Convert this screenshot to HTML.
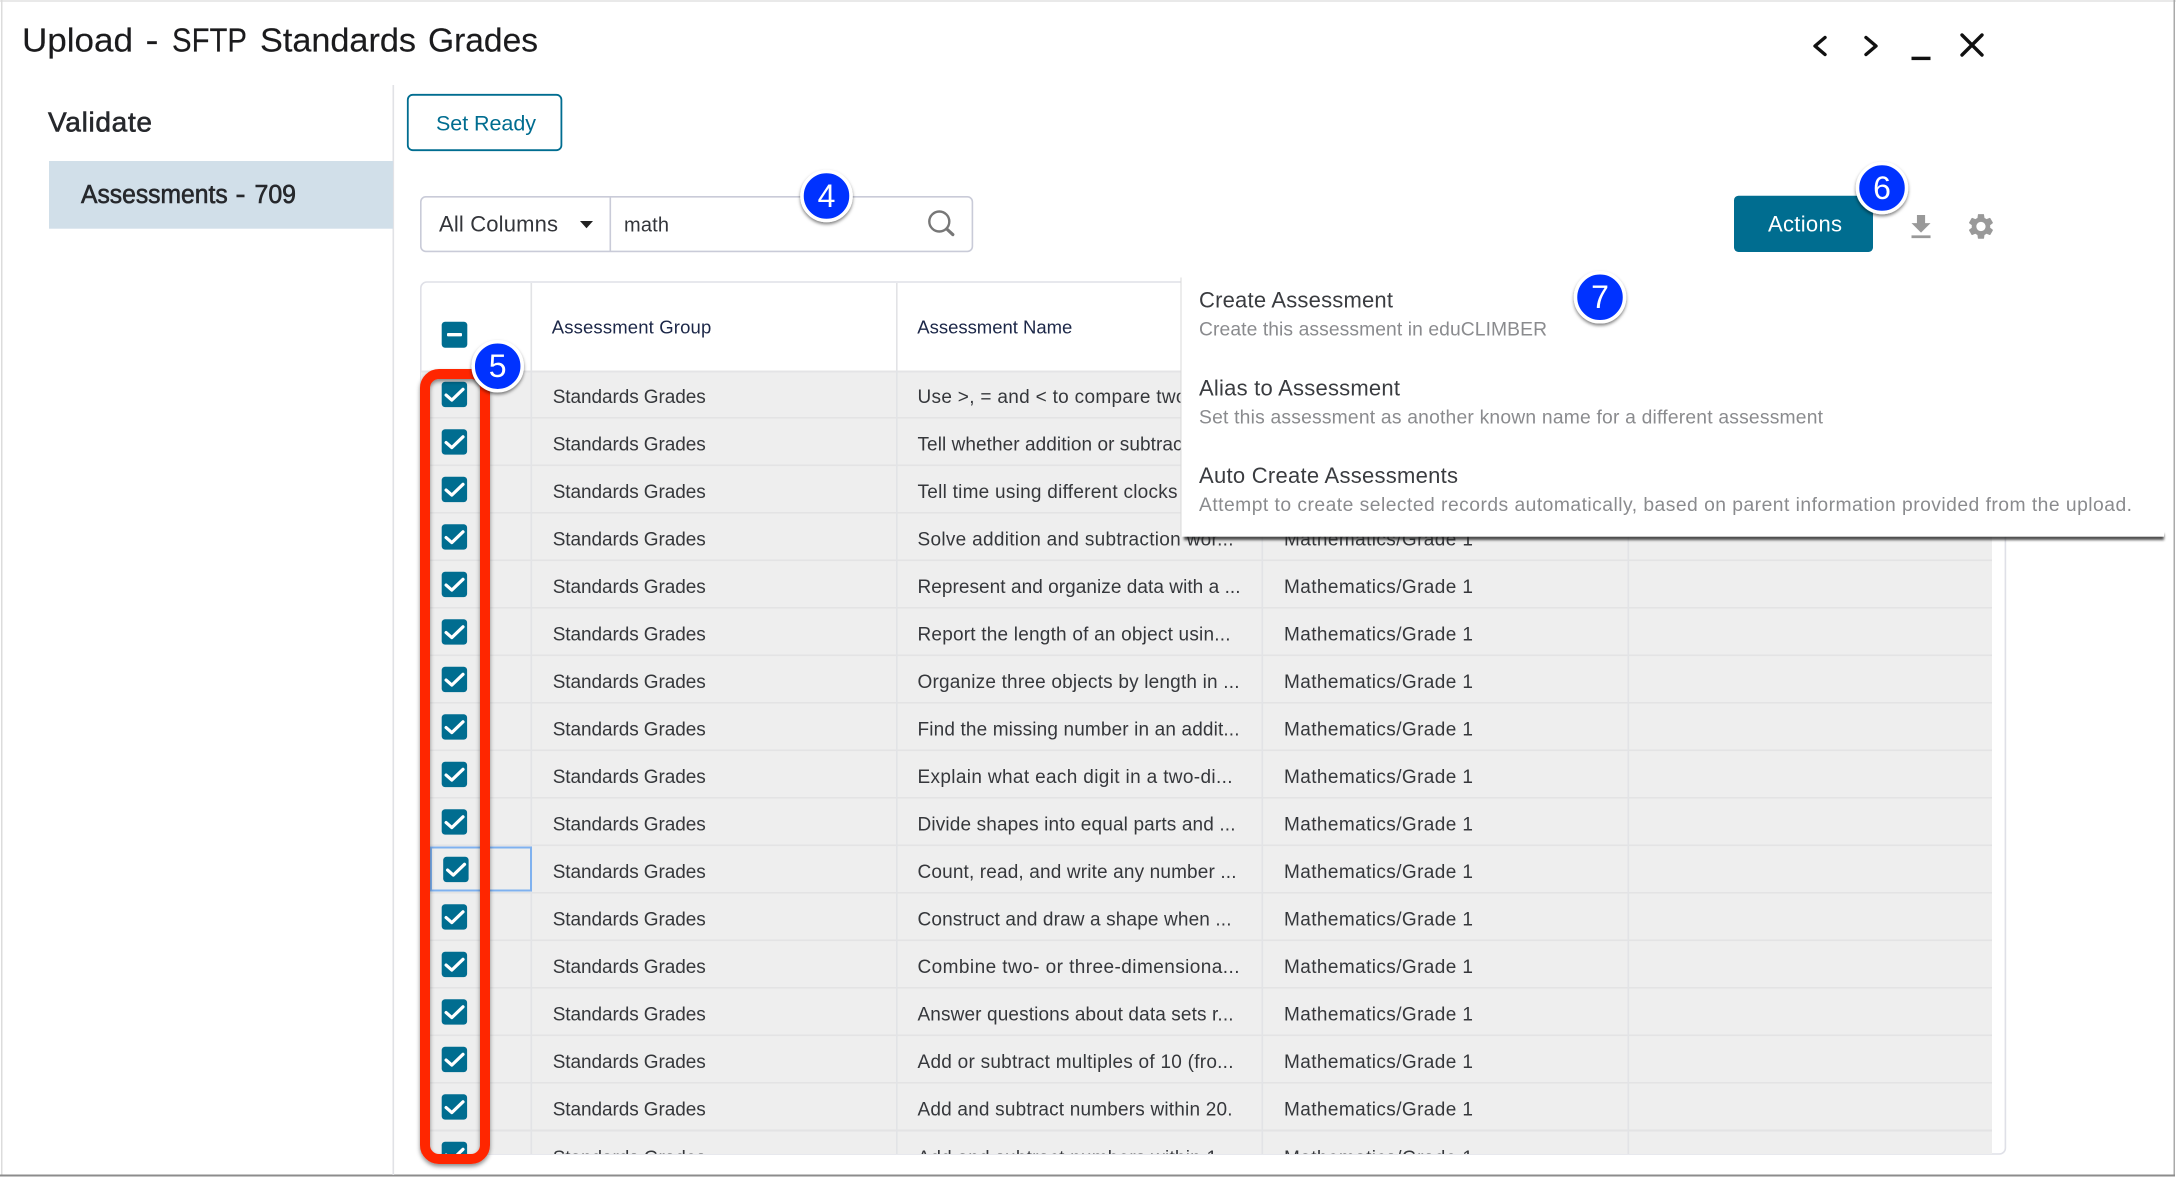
<!DOCTYPE html>
<html lang="en">
<head>
<meta charset="utf-8">
<title>Upload - SFTP Standards Grades</title>
<style>
html,body{margin:0;padding:0;background:#fff;width:2176px;height:1178px;overflow:hidden}
svg{display:block}
text{font-family:"Liberation Sans",sans-serif}
.s{font-size:19px;fill:#35373b}
.h{font-size:18.5px;fill:#1c2748}
.mt{font-size:22px;fill:#3a3c40}
.ms{font-size:19.3px;fill:#8a8b8e}
.n{font-size:32px;fill:#fff;text-anchor:middle}
.med{stroke-width:.6px}
.ti{font-size:33px;fill:#1b1b1d;stroke:#1b1b1d;stroke-width:.15px}
</style>
</head>
<body>
<svg width="2176" height="1178" viewBox="0 0 2176 1178" xmlns="http://www.w3.org/2000/svg">
<defs>
<filter id="sh" x="-30%" y="-30%" width="160%" height="160%"><feDropShadow dx="0" dy="2" stdDeviation="1.6" flood-color="#000" flood-opacity=".5"/></filter>
<filter id="shr" x="-30%" y="-5%" width="160%" height="110%"><feDropShadow dx="0" dy="2.5" stdDeviation="2" flood-color="#000" flood-opacity=".45"/></filter>
<filter id="bl" x="-2%" y="-200%" width="104%" height="500%"><feGaussianBlur stdDeviation="1.2"/></filter>
<clipPath id="tb"><rect x="421" y="283" width="1584" height="871"/></clipPath>
<g id="c"><rect x="0" y="0" width="25.4" height="25.4" rx="3.4" fill="#006d90"/><path d="M4.4 13.4 L10.1 18.4 L21.3 7.6" fill="none" stroke="#fff" stroke-width="3.2" stroke-linecap="round" stroke-linejoin="round"/></g>
</defs>

<rect width="2176" height="1178" fill="#fff"/>

<!-- window edges -->
<rect x="0" y="0" width="2176" height="2" fill="#e9e9e9"/>
<rect x="1" y="0" width="1.5" height="1176" fill="#dcdcdc"/>
<rect x="2173.5" y="0" width="1.5" height="1176" fill="#a9a9a9"/>
<rect x="0" y="1174.5" width="2175" height="2" fill="#8c8c8c"/>

<!-- title bar -->
<text class="ti" x="22" y="51.5" textLength="111" lengthAdjust="spacingAndGlyphs">Upload</text>
<text class="ti" x="145.5" y="51.5" textLength="13" lengthAdjust="spacingAndGlyphs">-</text>
<text class="ti" x="172" y="51.5" textLength="75" lengthAdjust="spacingAndGlyphs">SFTP</text>
<text class="ti" x="260" y="51.5" textLength="156" lengthAdjust="spacingAndGlyphs">Standards</text>
<text class="ti" x="428" y="51.5" textLength="110" lengthAdjust="spacingAndGlyphs">Grades</text>
<path d="M1825 37.5 L1815 46 L1825 54.5" fill="none" stroke="#111" stroke-width="3.4" stroke-linecap="round" stroke-linejoin="round"/>
<path d="M1866 37.5 L1876 46 L1866 54.5" fill="none" stroke="#111" stroke-width="3.4" stroke-linecap="round" stroke-linejoin="round"/>
<rect x="1911.5" y="56.7" width="19" height="3.4" fill="#111"/>
<path d="M1962 35 L1982 55 M1982 35 L1962 55" fill="none" stroke="#111" stroke-width="3.4" stroke-linecap="round"/>

<!-- sidebar -->
<rect x="392.5" y="85" width="1.6" height="1090" fill="#e1e2e6"/>
<text x="48" y="131.5" font-size="28" fill="#26282c" stroke="#26282c" class="med" textLength="104" lengthAdjust="spacing">Validate</text>
<rect x="49" y="161" width="344" height="67.7" fill="#d1dfe9"/>
<text x="81" y="203" font-size="25.5" fill="#26282c" stroke="#26282c" class="med" textLength="146.7" lengthAdjust="spacingAndGlyphs">Assessments</text>
<text x="235.5" y="203" font-size="25.5" fill="#26282c" stroke="#26282c" class="med" textLength="10" lengthAdjust="spacingAndGlyphs">-</text>
<text x="254.5" y="203" font-size="25.5" fill="#26282c" stroke="#26282c" class="med" textLength="41.5" lengthAdjust="spacingAndGlyphs">709</text>

<!-- set ready -->
<rect x="407.8" y="94.8" width="153.6" height="55.4" rx="5" fill="#fff" stroke="#006d90" stroke-width="1.8"/>
<text x="436" y="130.5" font-size="21.5" fill="#006d90" textLength="100" lengthAdjust="spacing">Set Ready</text>

<!-- search -->
<rect x="420.8" y="196.8" width="551.6" height="54.6" rx="5" fill="#fff" stroke="#c9cbd8" stroke-width="1.6"/>
<rect x="609.5" y="197" width="1.6" height="54" fill="#c9cbd8"/>
<text x="439" y="231.5" font-size="22" fill="#33353a" textLength="119" lengthAdjust="spacing">All Columns</text>
<path d="M580 221 H593 L586.5 228.2 Z" fill="#222"/>
<text x="624" y="231.5" font-size="20" fill="#33353a" textLength="45" lengthAdjust="spacing">math</text>
<circle cx="939.3" cy="221.5" r="10" fill="none" stroke="#777" stroke-width="2.4"/>
<path d="M946.8 229 L952.8 234.6" stroke="#777" stroke-width="3.2" stroke-linecap="round"/>

<!-- actions -->
<rect x="1734" y="195.7" width="139" height="56.3" rx="4.5" fill="#006d90"/>
<text x="1768" y="231.5" font-size="22" fill="#fff" textLength="74" lengthAdjust="spacing">Actions</text>
<path transform="translate(1904.7 210.9) scale(1.36)" d="M19 9h-4V3H9v6H5l7 7 7-7zM5 18v2h14v-2H5z" fill="#999"/>
<path transform="translate(1965.6 211.1) scale(1.28)" d="M19.14 12.94c.04-.3.06-.61.06-.94 0-.32-.02-.64-.07-.94l2.03-1.58c.18-.14.23-.41.12-.61l-1.92-3.32c-.12-.22-.37-.29-.59-.22l-2.39.96c-.5-.38-1.03-.7-1.62-.94l-.36-2.54c-.04-.24-.24-.41-.48-.41h-3.84c-.24 0-.43.17-.47.41l-.36 2.54c-.59.24-1.13.57-1.62.94l-2.39-.96c-.22-.08-.47 0-.59.22L2.74 8.87c-.12.21-.08.47.12.61l2.03 1.58c-.05.3-.09.63-.09.94s.02.64.07.94l-2.03 1.58c-.18.14-.23.41-.12.61l1.92 3.32c.12.22.37.29.59.22l2.39-.96c.5.38 1.03.7 1.62.94l.36 2.54c.05.24.24.41.48.41h3.84c.24 0 .44-.17.47-.41l.36-2.54c.59-.24 1.13-.56 1.62-.94l2.39.96c.22.08.47 0 .59-.22l1.92-3.32c.12-.22.07-.47-.12-.61l-2.01-1.58zM12 15.6c-1.98 0-3.6-1.62-3.6-3.6s1.62-3.6 3.6-3.6 3.6 1.62 3.6 3.6-1.62 3.6-3.6 3.6z" fill="#999"/>

<!-- table -->
<rect x="420.8" y="282" width="1584.6" height="872" rx="6" fill="#fff" stroke="#dfe0e7" stroke-width="1.6"/>
<g clip-path="url(#tb)">
<rect x="421" y="372" width="1571" height="782" fill="#eeeeee"/>
<rect x="421" y="370.5" width="1571" height="2" fill="#e4e4e6"/>
<g fill="#e3e3e4">
<rect x="421" y="417" width="1571" height="1.6"/><rect x="421" y="464.5" width="1571" height="1.6"/><rect x="421" y="512" width="1571" height="1.6"/><rect x="421" y="559.5" width="1571" height="1.6"/><rect x="421" y="607" width="1571" height="1.6"/><rect x="421" y="654.5" width="1571" height="1.6"/><rect x="421" y="702" width="1571" height="1.6"/><rect x="421" y="749.5" width="1571" height="1.6"/><rect x="421" y="797" width="1571" height="1.6"/><rect x="421" y="844.5" width="1571" height="1.6"/><rect x="421" y="892" width="1571" height="1.6"/><rect x="421" y="939.5" width="1571" height="1.6"/><rect x="421" y="987" width="1571" height="1.6"/><rect x="421" y="1034.5" width="1571" height="1.6"/><rect x="421" y="1082" width="1571" height="1.6"/><rect x="421" y="1129.5" width="1571" height="2"/>
</g>
<g fill="#e2e3e6">
<rect x="530.5" y="283" width="1.6" height="871"/><rect x="896" y="283" width="1.6" height="871"/><rect x="1261.5" y="283" width="1.6" height="871"/><rect x="1627.5" y="283" width="1.6" height="871"/>
</g>

<rect x="431" y="847.5" width="100" height="43" fill="none" stroke="#7fb1ef" stroke-width="2"/>

<text class="h" x="551.7" y="333.3" textLength="159.6" lengthAdjust="spacing">Assessment Group</text>
<text class="h" x="917.3" y="333.3" textLength="155" lengthAdjust="spacing">Assessment Name</text>

<rect x="441.7" y="321.7" width="25.6" height="26" rx="3.4" fill="#006d90"/>
<rect x="447" y="333" width="15" height="3.4" rx="1" fill="#fff"/>

<use href="#c" x="441.7" y="381.7"/><use href="#c" x="441.7" y="429.2"/><use href="#c" x="441.7" y="476.7"/><use href="#c" x="441.7" y="524.2"/><use href="#c" x="441.7" y="571.7"/><use href="#c" x="441.7" y="619.2"/><use href="#c" x="441.7" y="666.7"/><use href="#c" x="441.7" y="714.2"/><use href="#c" x="441.7" y="761.7"/><use href="#c" x="441.7" y="809.2"/><use href="#c" x="443.2" y="856.7"/><use href="#c" x="441.7" y="904.2"/><use href="#c" x="441.7" y="951.7"/><use href="#c" x="441.7" y="999.2"/><use href="#c" x="441.7" y="1046.7"/><use href="#c" x="441.7" y="1094.2"/><use href="#c" x="441.7" y="1141.7"/>

<text class="s" x="552.7" y="403" textLength="153" lengthAdjust="spacing">Standards Grades</text>
<text class="s" x="552.7" y="450.5" textLength="153" lengthAdjust="spacing">Standards Grades</text>
<text class="s" x="552.7" y="498" textLength="153" lengthAdjust="spacing">Standards Grades</text>
<text class="s" x="552.7" y="545.5" textLength="153" lengthAdjust="spacing">Standards Grades</text>
<text class="s" x="552.7" y="593" textLength="153" lengthAdjust="spacing">Standards Grades</text>
<text class="s" x="552.7" y="640.5" textLength="153" lengthAdjust="spacing">Standards Grades</text>
<text class="s" x="552.7" y="688" textLength="153" lengthAdjust="spacing">Standards Grades</text>
<text class="s" x="552.7" y="735.5" textLength="153" lengthAdjust="spacing">Standards Grades</text>
<text class="s" x="552.7" y="783" textLength="153" lengthAdjust="spacing">Standards Grades</text>
<text class="s" x="552.7" y="830.5" textLength="153" lengthAdjust="spacing">Standards Grades</text>
<text class="s" x="552.7" y="878" textLength="153" lengthAdjust="spacing">Standards Grades</text>
<text class="s" x="552.7" y="925.5" textLength="153" lengthAdjust="spacing">Standards Grades</text>
<text class="s" x="552.7" y="973" textLength="153" lengthAdjust="spacing">Standards Grades</text>
<text class="s" x="552.7" y="1020.5" textLength="153" lengthAdjust="spacing">Standards Grades</text>
<text class="s" x="552.7" y="1068" textLength="153" lengthAdjust="spacing">Standards Grades</text>
<text class="s" x="552.7" y="1115.5" textLength="153" lengthAdjust="spacing">Standards Grades</text>
<text class="s" x="552.7" y="1164" textLength="153" lengthAdjust="spacing">Standards Grades</text>

<text class="s" x="917.5" y="403" textLength="269" lengthAdjust="spacing">Use &gt;, = and &lt; to compare two</text>
<text class="s" x="917.5" y="450.5" textLength="265" lengthAdjust="spacing">Tell whether addition or subtrac</text>
<text class="s" x="917.5" y="498" textLength="260" lengthAdjust="spacing">Tell time using different clocks</text>
<text class="s" x="917.5" y="545.5" textLength="316" lengthAdjust="spacing">Solve addition and subtraction wor...</text>
<text class="s" x="917.5" y="593" textLength="323" lengthAdjust="spacing">Represent and organize data with a ...</text>
<text class="s" x="917.5" y="640.5" textLength="313" lengthAdjust="spacing">Report the length of an object usin...</text>
<text class="s" x="917.5" y="688" textLength="322" lengthAdjust="spacing">Organize three objects by length in ...</text>
<text class="s" x="917.5" y="735.5" textLength="322" lengthAdjust="spacing">Find the missing number in an addit...</text>
<text class="s" x="917.5" y="783" textLength="315" lengthAdjust="spacing">Explain what each digit in a two-di...</text>
<text class="s" x="917.5" y="830.5" textLength="318" lengthAdjust="spacing">Divide shapes into equal parts and ...</text>
<text class="s" x="917.5" y="878" textLength="319" lengthAdjust="spacing">Count, read, and write any number ...</text>
<text class="s" x="917.5" y="925.5" textLength="314" lengthAdjust="spacing">Construct and draw a shape when ...</text>
<text class="s" x="917.5" y="973" textLength="322" lengthAdjust="spacing">Combine two- or three-dimensiona...</text>
<text class="s" x="917.5" y="1020.5" textLength="316" lengthAdjust="spacing">Answer questions about data sets r...</text>
<text class="s" x="917.5" y="1068" textLength="316" lengthAdjust="spacing">Add or subtract multiples of 10 (fro...</text>
<text class="s" x="917.5" y="1115.5" textLength="315" lengthAdjust="spacing">Add and subtract numbers within 20.</text>
<text class="s" x="917.5" y="1164" textLength="316" lengthAdjust="spacing">Add and subtract numbers within 1...</text>

<text class="s" x="1284" y="545.5" textLength="189" lengthAdjust="spacing">Mathematics/Grade 1</text>
<text class="s" x="1284" y="593" textLength="189" lengthAdjust="spacing">Mathematics/Grade 1</text>
<text class="s" x="1284" y="640.5" textLength="189" lengthAdjust="spacing">Mathematics/Grade 1</text>
<text class="s" x="1284" y="688" textLength="189" lengthAdjust="spacing">Mathematics/Grade 1</text>
<text class="s" x="1284" y="735.5" textLength="189" lengthAdjust="spacing">Mathematics/Grade 1</text>
<text class="s" x="1284" y="783" textLength="189" lengthAdjust="spacing">Mathematics/Grade 1</text>
<text class="s" x="1284" y="830.5" textLength="189" lengthAdjust="spacing">Mathematics/Grade 1</text>
<text class="s" x="1284" y="878" textLength="189" lengthAdjust="spacing">Mathematics/Grade 1</text>
<text class="s" x="1284" y="925.5" textLength="189" lengthAdjust="spacing">Mathematics/Grade 1</text>
<text class="s" x="1284" y="973" textLength="189" lengthAdjust="spacing">Mathematics/Grade 1</text>
<text class="s" x="1284" y="1020.5" textLength="189" lengthAdjust="spacing">Mathematics/Grade 1</text>
<text class="s" x="1284" y="1068" textLength="189" lengthAdjust="spacing">Mathematics/Grade 1</text>
<text class="s" x="1284" y="1115.5" textLength="189" lengthAdjust="spacing">Mathematics/Grade 1</text>
<text class="s" x="1284" y="1164" textLength="189" lengthAdjust="spacing">Mathematics/Grade 1</text>
</g>

<!-- dropdown menu -->
<rect x="1184" y="534" width="980" height="6" fill="#222" opacity=".8" filter="url(#bl)"/>
<rect x="1180.5" y="277.5" width="1.5" height="259" fill="#d8d8d8"/>
<rect x="1181.5" y="277" width="982.5" height="259.7" fill="#fff"/>
<text class="mt" x="1199" y="307.5" textLength="194" lengthAdjust="spacing">Create Assessment</text>
<text class="ms" x="1199" y="335.5" textLength="348" lengthAdjust="spacing">Create this assessment in eduCLIMBER</text>
<text class="mt" x="1199" y="395.5" textLength="201" lengthAdjust="spacing">Alias to Assessment</text>
<text class="ms" x="1199" y="423.5" textLength="624" lengthAdjust="spacing">Set this assessment as another known name for a different assessment</text>
<text class="mt" x="1199" y="483" textLength="259" lengthAdjust="spacing">Auto Create Assessments</text>
<text class="ms" x="1199" y="511" textLength="933" lengthAdjust="spacing">Attempt to create selected records automatically, based on parent information provided from the upload.</text>

<!-- annotation: red rectangle -->
<rect x="425" y="374" width="60" height="785" rx="14" fill="none" stroke="#ff2600" stroke-width="10" filter="url(#shr)"/>

<!-- annotation bubbles -->
<g filter="url(#sh)"><circle cx="826.5" cy="196" r="24.5" fill="#0433ff" stroke="#fff" stroke-width="3.5"/></g>
<text class="n" x="826.5" y="207">4</text>
<g filter="url(#sh)"><circle cx="497.7" cy="366.2" r="24.5" fill="#0433ff" stroke="#fff" stroke-width="3.5"/></g>
<text class="n" x="497.7" y="377">5</text>
<g filter="url(#sh)"><circle cx="1882" cy="188" r="24.5" fill="#0433ff" stroke="#fff" stroke-width="3.5"/></g>
<text class="n" x="1882" y="199">6</text>
<g filter="url(#sh)"><circle cx="1600" cy="297.3" r="24.5" fill="#0433ff" stroke="#fff" stroke-width="3.5"/></g>
<text class="n" x="1600" y="308">7</text>
</svg>
</body>
</html>
